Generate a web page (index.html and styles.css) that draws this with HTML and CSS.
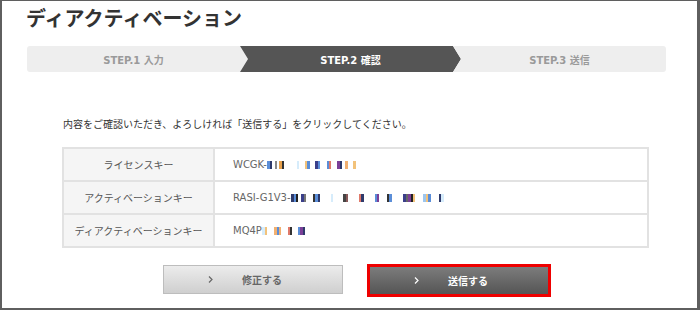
FILE: index.html
```html
<!DOCTYPE html>
<html>
<head>
  <meta charset="UTF-8">
  <title>ディアクティベーション</title>
  <link rel="stylesheet" href="styles.css">
</head>
<body>
  <div class="page">
    <h1>ディアクティベーション</h1>

    <!-- progress steps -->
    <div class="steps">
      <div class="step step-first">STEP.1 入力</div>
      <div class="step step-current">STEP.2 確認</div>
      <div class="step step-last">STEP.3 送信</div>
    </div>

    <p class="lead">内容をご確認いただき、よろしければ「送信する」をクリックしてください。</p>

    <table class="confirm">
      <tr>
        <th>ライセンスキー</th>
        <td>WCGK-<span class="mask mask-1"></span></td>
      </tr>
      <tr>
        <th>アクティベーションキー</th>
        <td>RASI-G1V3-<span class="mask mask-2"></span></td>
      </tr>
      <tr>
        <th>ディアクティベーションキー</th>
        <td>MQ4P<span class="mask mask-3"></span></td>
      </tr>
    </table>

    <div class="actions">
      <button type="button" class="btn btn-back">
        <svg class="chev" width="5" height="7" viewBox="0 0 5 7"><polyline points="1,0.5 4,3.5 1,6.5" fill="none" stroke="currentColor" stroke-width="1.2"/></svg>
        <span class="btn-label">修正する</span>
      </button>
      <button type="button" class="btn btn-send">
        <svg class="chev" width="5" height="7" viewBox="0 0 5 7"><polyline points="1,0.5 4,3.5 1,6.5" fill="none" stroke="currentColor" stroke-width="1.2"/></svg>
        <span class="btn-label">送信する</span>
      </button>
    </div>
  </div>
</body>
</html>
```

FILE: styles.css
```css
html, body {
  margin: 0;
  background: #fff;
}
body {
  font-family: "Noto Sans CJK JP", "DejaVu Sans", sans-serif;
  color: #333;
}
.page {
  width: 700px;
  height: 310px;
  box-sizing: border-box;
  border: solid #5f5f5f;
  border-width: 1px 3px 2px 2px;
  padding-left: 24px;
  overflow: hidden;
}
h1 {
  margin: 6px 0 0;
  font-size: 20px;
  line-height: 22px;
  font-weight: bold;
  color: #333;
}

/* steps */
.steps {
  display: flex;
  width: 639px;
  height: 26px;
  margin: 17px 0 0 1px;
}
.step {
  display: flex;
  align-items: center;
  justify-content: center;
  font-family: "DejaVu Sans", "Noto Sans CJK JP", sans-serif;
  font-size: 10px;
  font-weight: bold;
  color: #9a9a9a;
  background: #eeeeee;
}
.step-first {
  width: 221px;
  padding-right: 8px;
  box-sizing: border-box;
  border-radius: 3px 0 0 3px;
  clip-path: polygon(0 0, calc(100% - 8px) 0, 100% 50%, calc(100% - 8px) 100%, 0 100%);
}
.step-current {
  width: 221px;
  margin-left: -8px;
  color: #fff;
  background: #555;
  clip-path: polygon(0 0, calc(100% - 8px) 0, 100% 50%, calc(100% - 8px) 100%, 0 100%, 8px 50%);
}
.step-last {
  flex: 1;
  margin-left: -8px;
  border-radius: 0 3px 3px 0;
  clip-path: polygon(0 0, 100% 0, 100% 100%, 0 100%, 8px 50%);
}

.lead {
  margin: 45px 0 0 37px;
  font-size: 10px;
  line-height: 14px;
  color: #333;
}

/* confirm table */
.confirm {
  margin: 16px 0 0 36px;
  width: 587px;
  border-collapse: collapse;
  font-size: 10px;
}
.confirm th,
.confirm td {
  border: 2px solid #e2e2e2;
  padding: 8px 0;
  line-height: 15px;
  height: 15px;
}
.confirm th {
  width: 149px;
  font-weight: normal;
  color: #555;
  background: #f5f5f5;
  text-align: center;
}
.confirm td {
  padding-left: 18px;
  font-family: "DejaVu Sans", "Noto Sans CJK JP", sans-serif;
  color: #666;
}

/* blurred key parts */
.mask {
  display: inline-block;
  height: 8px;
  vertical-align: -1px;
}
.mask-1 {
  width: 92px;
  background: linear-gradient(90deg, #5b8ed8 0 3px, #2f3a6b 3px 5px, transparent 5px 8px, #8a8a8a 8px 10px, transparent 10px 12px, #e9a14a 12px 15px, #333 15px 17px, transparent 17px 30px, #d6ecfb 30px 32px, transparent 32px 38px, #f2c27a 38px 40px, #5b8ed8 40px 43px, transparent 43px 48px, #3b3f8a 48px 51px, #5b8ed8 51px 53px, transparent 53px 60px, #5b8ed8 60px 62px, #e07a6a 62px 64px, transparent 64px 70px, #7b3f98 70px 73px, #2f3a6b 73px 75px, transparent 75px 78px, #f2b070 78px 81px, transparent 81px 86px, #f2c27a 86px 89px, transparent 89px);
}
.mask-2 {
  width: 188px;
  background: linear-gradient(90deg, #2f3a6b 0 3px, #5b8ed8 3px 5px, #222 5px 7px, transparent 7px 10px, #3b3f8a 10px 13px, #777 13px 15px, transparent 15px 22px, #333 22px 24px, #5b8ed8 24px 27px, #2f3a6b 27px 29px, transparent 29px 40px, #d6ecfb 40px 42px, transparent 42px 52px, #444 52px 55px, #8a5a5a 55px 57px, transparent 57px 68px, #e07a6a 68px 70px, #2f3a6b 70px 73px, transparent 73px 84px, #5b8ed8 84px 86px, #7b3f98 86px 88px, transparent 88px 96px, #333 96px 98px, #5b8ed8 98px 101px, transparent 101px 112px, #3b3f8a 112px 115px, #666 115px 117px, #7b3f98 117px 120px, #222 120px 122px, #f2c27a 122px 124px, transparent 124px 132px, #9cc6ef 132px 135px, #f2c27a 135px 137px, #5b8ed8 137px 140px, transparent 140px 148px, #2f3a6b 148px 150px, #d6ecfb 150px 153px, transparent 153px);
}
.mask-3 {
  width: 55px;
  background: linear-gradient(90deg, #d6ecfb 0 3px, #f2c27a 3px 5px, transparent 5px 12px, #f2b070 12px 15px, #5b8ed8 15px 17px, #f2b070 17px 19px, transparent 19px 26px, #e07a6a 26px 28px, #333 28px 30px, transparent 30px 36px, #5b8ed8 36px 38px, #7b3f98 38px 41px, #2f3a6b 41px 43px, transparent 43px);
}

/* buttons */
.actions {
  display: flex;
  gap: 26px;
  margin: 17px 0 0 137px;
}
.btn {
  display: flex;
  align-items: center;
  width: 180px;
  height: 29px;
  padding: 0 0 0 44px;
  box-sizing: border-box;
  font-family: "Noto Sans CJK JP", sans-serif;
  font-size: 10px;
  font-weight: bold;
  cursor: pointer;
}
.btn-back {
  color: #666;
  border: 1px solid #bdbdbd;
  background: linear-gradient(#ececec, #cfcfcf);
}
.btn-send {
  margin-top: 1px;
  color: #fff;
  border: 1px solid #555;
  background: linear-gradient(#7c7c7c, #555);
  outline: 3px solid #ee0000;
  outline-offset: -1px;
}
.chev {
  display: block;
}
.btn-label {
  margin-left: 29px;
}
```
